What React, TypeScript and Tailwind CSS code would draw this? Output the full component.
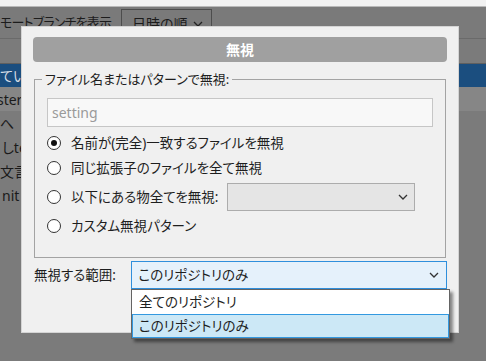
import React from 'react';

const Chevron = ({ className = '' }: { className?: string }) => (
    <svg width="10" height="6" viewBox="0 0 10 6" className={className}>
        <polyline points="1,1 5,5 9,1" fill="none" stroke="currentColor" strokeWidth="1.3" />
    </svg>
);

const Radio = ({ checked }: { checked?: boolean }) => (
    <span className="flex h-[14px] w-[14px] shrink-0 items-center justify-center rounded-full border border-[#333] bg-white">
        {checked && <span className="h-[6px] w-[6px] rounded-full bg-[#111]" />}
    </span>
);

const bgRows = [
    { text: 'ていません', cls: 'bg-[#1b4e7f] text-[#d6dde6] border-t border-[#5f5f5f]' },
    { text: 'master', cls: 'bg-[#868686] text-[#1a1a1a] -ml-[24px]' },
    { text: 'へ', cls: 'text-[#1a1a1a]' },
    { text: 'しtest', cls: 'text-[#1a1a1a] pl-[2px]' },
    { text: '文言を修正', cls: 'text-[#1a1a1a]' },
    { text: 'nit', cls: 'text-[#1a1a1a] pl-[2px]' },
];

export default function App() {
    return (
        <div className="relative h-[361px] w-[486px] overflow-hidden bg-[#7b7b7b] font-['Noto_Sans','Noto_Sans_CJK_JP',sans-serif] [font-feature-settings:'palt']">
            {/* dimmed window behind the dialog */}
            <div className="h-[7px] border-b border-[#b9b9b9] bg-[#f2f2f2]" />
            <div className="flex h-[32px] items-start border-b border-[#6a6a6a] bg-[#7a7a7a]">
                <span className="mt-[6px] w-[121px] whitespace-nowrap text-[13px] tracking-[-0.8px] text-[#1c1c1c]">モートブランチを表示</span>
                <div className="mt-[2px] flex h-[29px] w-[91px] shrink-0 items-center border border-[#4d4d4d] pl-[10px] pr-[8px] text-[14px] text-[#1c1c1c]">
                    <span className="flex-1 whitespace-nowrap">日時の順</span>
                    <Chevron className="text-[#222]" />
                </div>
            </div>
            <div className="h-[24px]" />
            {bgRows.map((r) => (
                <div key={r.text} className={`flex h-[24px] items-center whitespace-nowrap text-[14px] ${r.cls}`}>
                    {r.text}
                </div>
            ))}

            {/* dialog */}
            <div className="absolute left-[21px] top-[26px] h-[307px] w-[438px] border border-[#d4d4d4] bg-[#f0f0f0] px-[11px] pt-[10px] text-[13.5px] text-[#1e1e1e]">
                <div className="flex h-[25px] items-center justify-center rounded-[4px] bg-[#a0a0a0] text-[14px] font-bold text-white">
                    無視
                </div>

                <fieldset className="mx-[1px] mt-[8px] h-[188px] border border-[#a3a3a3] px-[12px] pb-0 pt-0">
                    <legend className="ml-[-5px] px-[3px] text-[13px] leading-[18px] text-[#1e1e1e]">ファイル名またはパターンで無視:</legend>
                    <div className="mt-[10px] flex h-[29px] items-center border border-[#c6c6c6] bg-[#f8f8f8] pl-[4px] text-[14px] text-[#9a9a9a]">
                        setting
                    </div>
                    <div className="mt-[6px] flex flex-col">
                        <label className="flex h-[20px] items-center gap-[10px]">
                            <Radio checked />
                            <span className="whitespace-nowrap">名前が(完全)一致するファイルを無視</span>
                        </label>
                        <label className="mt-[5px] flex h-[20px] items-center gap-[10px]">
                            <Radio />
                            <span className="whitespace-nowrap">同じ拡張子のファイルを全て無視</span>
                        </label>
                        <label className="mt-[5px] flex h-[28px] items-center gap-[10px]">
                            <Radio />
                            <span className="w-[146px] shrink-0 whitespace-nowrap">以下にある物全てを無視:</span>
                            <div className="flex h-[28px] w-[188px] shrink-0 items-center justify-end border border-[#acacac] bg-[#e5e5e5] pr-[6px]">
                                <Chevron className="text-[#333]" />
                            </div>
                        </label>
                        <label className="mt-[5px] flex h-[20px] items-center gap-[10px]">
                            <Radio />
                            <span className="whitespace-nowrap">カスタム無視パターン</span>
                        </label>
                    </div>
                </fieldset>

                <div className="relative ml-[1px] mt-[3px] flex items-center">
                    <span className="w-[97px] whitespace-nowrap">無視する範囲:</span>
                    <div className="flex h-[28px] w-[318px] items-center border border-[#2f8fdc] bg-[#e5f1fb] pl-[7px] pr-[7px]">
                        <span className="flex-1 text-[#1e1e1e]">このリポジトリのみ</span>
                        <Chevron className="text-[#333]" />
                    </div>

                    <div className="absolute left-[97px] top-[28px] z-10 w-[319px] border border-[#646464] bg-white shadow-[3px_3px_3px_rgba(0,0,0,0.45)]">
                        <div className="flex h-[24px] items-center pl-[7px]">全てのリポジトリ</div>
                        <div className="flex h-[24px] items-center border border-[#3399e0] bg-[#cce8f6] pl-[6px]">このリポジトリのみ</div>
                    </div>
                </div>
            </div>
        </div>
    );
}
